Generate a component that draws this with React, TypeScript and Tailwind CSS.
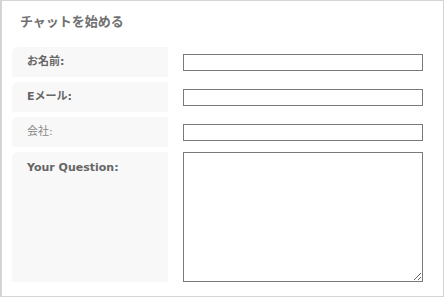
import React from "react";

const font = { fontFamily: '"DejaVu Sans", "Noto Sans CJK JP", sans-serif' };

function Row({ label, bold = true, children, tall = false }: { label: string; bold?: boolean; children: React.ReactNode; tall?: boolean }) {
  return (
    <div className={`flex ${tall ? "items-start" : "items-center"} gap-[15px]`}>
      <div
        className={`w-[156px] ${tall ? "h-[130px] pt-[8px]" : "h-[30px] flex items-center"} bg-[#f8f8f8] rounded-tl-[6px] pl-[15px] text-[11px] text-[#666] ${bold ? "font-bold" : "font-normal text-[#888]"}`}
      >
        {label}
      </div>
      {children}
    </div>
  );
}

export default function App() {
  return (
    <div className="w-[448px] h-[298px] bg-white" style={font}>
      <div className="w-[444px] h-[297px] border border-[#d4d4d4] border-l-2 pl-[10px] pt-[10px]">
        <div className="pl-[8px] text-[13px] leading-[20px] text-[#707070] font-bold" style={{ fontFamily: '"Noto Sans CJK JP", sans-serif' }}>
          チャットを始める
        </div>
        <div className="mt-[16px] flex flex-col gap-[5px]">
          <Row label="お名前:">
            <input className="w-[240px] h-[17px] border border-[#7a7a7a] bg-white outline-none" />
          </Row>
          <Row label="Eメール:">
            <input className="w-[240px] h-[17px] border border-[#7a7a7a] bg-white outline-none" />
          </Row>
          <Row label="会社:" bold={false}>
            <input className="w-[240px] h-[17px] border border-[#7a7a7a] bg-white outline-none" />
          </Row>
          <Row label="Your Question:" tall>
            <textarea className="w-[240px] h-[130px] border border-[#7a7a7a] bg-white outline-none resize" />
          </Row>
        </div>
      </div>
    </div>
  );
}
